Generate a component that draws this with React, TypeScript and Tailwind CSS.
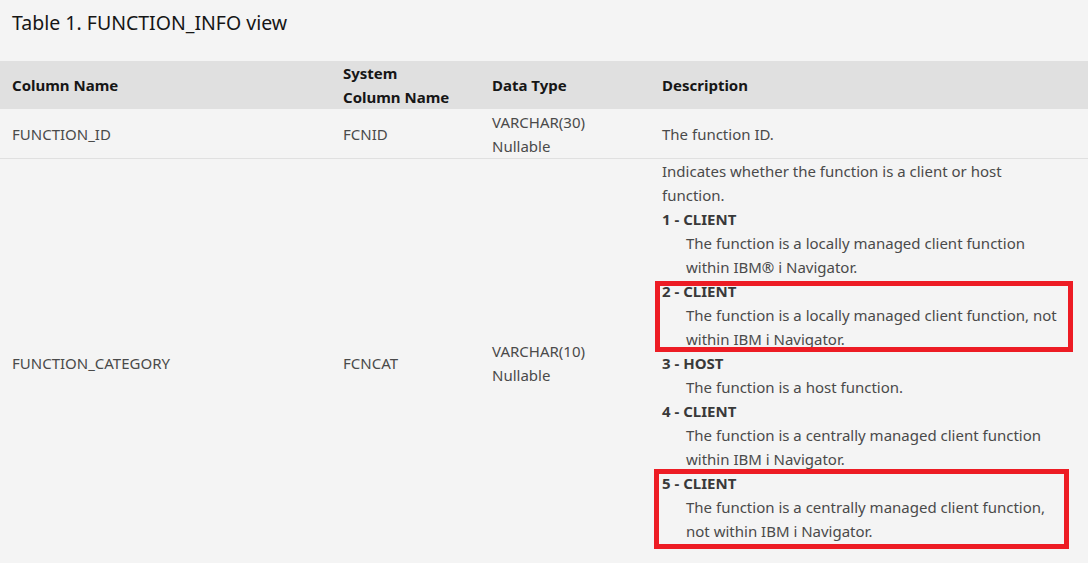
import React from 'react';

const items = [
  { term: '1 - CLIENT', desc: ['The function is a locally managed client function', 'within IBM® i Navigator.'], box: '' },
  { term: '2 - CLIENT', desc: ['The function is a locally managed client function, not', 'within IBM i Navigator.'], box: 'left-[-7px] right-[3px] top-[2px] bottom-[-1px]' },
  { term: '3 - HOST', desc: ['The function is a host function.'], box: '' },
  { term: '4 - CLIENT', desc: ['The function is a centrally managed client function', 'within IBM i Navigator.'], box: '' },
  { term: '5 - CLIENT', desc: ['The function is a centrally managed client function,', 'not within IBM i Navigator.'], box: 'left-[-8px] right-[7px] top-[-2px] bottom-[-6px]' },
];

const App = () => {
  return (
    <div className="min-h-screen w-[1088px] bg-[#f4f4f4] text-[15px] text-[#4a4a4a]" style={{ fontFamily: '"Noto Sans", "Open Sans", sans-serif' }}>
      <div className="px-3 pt-[9px] pb-[24px] text-[19.5px] leading-[28px] text-[#161616]">
        Table 1. FUNCTION_INFO view
      </div>

      {/* header */}
      <div className="grid grid-cols-[331px_149px_170px_1fr] items-center h-[48px] bg-[#e0e0e0] font-bold text-[#161616] leading-6">
        <div className="px-3">Column Name</div>
        <div className="px-3">System<br />Column Name</div>
        <div className="px-3">Data Type</div>
        <div className="px-3">Description</div>
      </div>

      {/* row 1 */}
      <div className="grid grid-cols-[331px_149px_170px_1fr] items-center leading-6 border-b border-[#e0e0e0] pt-px">
        <div className="px-3">FUNCTION_ID</div>
        <div className="px-3">FCNID</div>
        <div className="px-3">VARCHAR(30)<br />Nullable</div>
        <div className="px-3">The function ID.</div>
      </div>

      {/* row 2 */}
      <div className="grid grid-cols-[331px_149px_170px_1fr] items-center leading-6">
        <div className="px-3">FUNCTION_CATEGORY</div>
        <div className="px-3">FCNCAT</div>
        <div className="px-3">VARCHAR(10)<br />Nullable</div>
        <div className="px-3 pb-6">
          <p>Indicates whether the function is a client or host<br />function.</p>
          <dl>
            {items.map((it) => (
              <div key={it.term} className="relative">
                <dt className="font-bold text-[#393939]">{it.term}</dt>
                <dd className="ml-6">
                  {it.desc.map((line, i) => (
                    <React.Fragment key={i}>
                      {i > 0 && <br />}
                      {line}
                    </React.Fragment>
                  ))}
                </dd>
                {it.box && <div className={`absolute border-[5px] border-[#ed1c24] ${it.box}`} />}
              </div>
            ))}
          </dl>
        </div>
      </div>
    </div>
  );
};

export default App;
